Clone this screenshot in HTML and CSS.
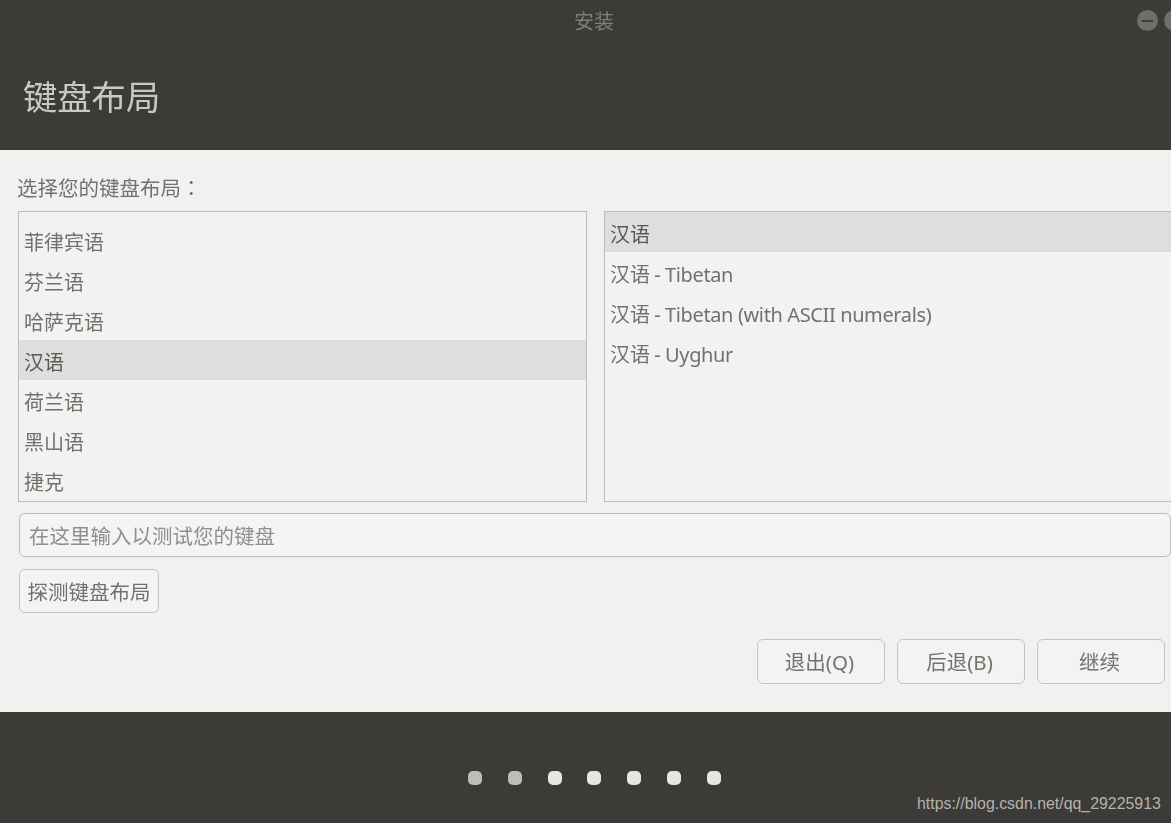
FILE: index.html
```html
<!DOCTYPE html>
<html lang="zh-CN">
<head>
<meta charset="utf-8">
<title>安装</title>
<link rel="stylesheet" href="styles.css">
</head>
<body>
<div class="window">
  <header class="header">
    <div class="titlebar">
      <span class="window-title">安装</span>
      <div class="window-controls">
        <span class="control"><span class="minus"></span></span>
        <span class="control"></span>
      </div>
    </div>
    <h1 class="page-title">键盘布局</h1>
  </header>
  <main class="main">
    <div class="prompt">选择您的键盘布局<span class="colon" lang="zh-TW">：</span></div>
    <div class="lists">
      <div class="list list-left">
        <ul class="rows rows-scrolled">
          <li class="row">法罗语</li>
          <li class="row">菲律宾语</li>
          <li class="row">芬兰语</li>
          <li class="row">哈萨克语</li>
          <li class="row selected">汉语</li>
          <li class="row">荷兰语</li>
          <li class="row">黑山语</li>
          <li class="row">捷克</li>
        </ul>
      </div>
      <div class="list list-right">
        <ul class="rows">
          <li class="row selected">汉语</li>
          <li class="row">汉语 <span class="latin">- Tibetan</span></li>
          <li class="row">汉语 <span class="latin">- Tibetan (with ASCII numerals)</span></li>
          <li class="row">汉语 <span class="latin">- Uyghur</span></li>
        </ul>
      </div>
    </div>
    <input class="test-input" type="text" placeholder="在这里输入以测试您的键盘">
    <div class="detect-row"><button class="btn btn-detect">探测键盘布局</button></div>
    <div class="actions">
      <button class="btn btn-action">退出(Q)</button>
      <button class="btn btn-action">后退(B)</button>
      <button class="btn btn-action">继续</button>
    </div>
  </main>
  <footer class="footer">
    <div class="dots">
      <span class="dot done"></span>
      <span class="dot done"></span>
      <span class="dot"></span>
      <span class="dot"></span>
      <span class="dot"></span>
      <span class="dot"></span>
      <span class="dot"></span>
    </div>
    <span class="watermark">https://blog.csdn.net/qq_29225913</span>
  </footer>
</div>
</body>
</html>
```
FILE: styles.css
```css
* { box-sizing: border-box; }
html, body { margin: 0; height: 100%; overflow: hidden; }
body {
  font-family: "Noto Sans", "Noto Sans CJK SC", sans-serif;
  font-size: 20px;
  color: #62605c;
  background: #3c3b37;
}
.window { width: 1171px; height: 823px; display: flex; flex-direction: column; overflow: hidden; }

.header { height: 150px; background: #3c3b37; flex: none; }
.titlebar {
  height: 42px;
  display: flex;
  align-items: center;
  position: relative;
  padding: 2px 0 0 574px;
}
.window-title { color: #7f7e7a; font-size: 20px; line-height: 40px; filter: blur(0.4px); }
.window-controls {
  position: absolute;
  left: 1137px;
  top: 10px;
  display: flex;
  gap: 6px;
  filter: blur(0.5px);
}
.control {
  width: 21px;
  height: 21px;
  border-radius: 50%;
  background: #6f6e6a;
  display: flex;
  align-items: center;
  justify-content: center;
  flex: none;
}
.minus { width: 11px; height: 2px; background: #3f3e3a; }
.page-title {
  margin: 0;
  padding: 31px 0 0 23px;
  font-size: 34.3px;
  line-height: 48px;
  font-weight: 400;
  color: #c9c8c4;
  filter: blur(0.4px);
}

.main {
  height: 562px;
  flex: none;
  background: #f2f1f0;
  padding: 25px 0 0 18px;
  display: flex;
  flex-direction: column;
  width: 1171px;
}
.prompt {
  height: 36px;
  line-height: 25px;
  margin-left: -1px;
  font-size: 20.5px;
  color: #73716e;
  filter: blur(0.4px);
}
.colon { font-family: "Noto Sans CJK TC", sans-serif; }
.lists { display: flex; gap: 17px; height: 291px; flex: none; }
.list {
  border: 1px solid #bdbcb9;
  background: #f3f2f1;
  overflow: hidden;
  height: 291px;
  flex: none;
  filter: blur(0.35px);
}
.list-left { width: 569px; }
.list-right { width: 580px; }
.rows { list-style: none; margin: 0; padding: 0; }
.rows-scrolled { margin-top: -32px; }
.row {
  height: 40px;
  line-height: 45px;
  padding-left: 5px;
  white-space: nowrap;
  color: #72716e;
}
.row.selected { background: #dfdedc; color: #5a5855; }
.latin { letter-spacing: -0.38px; margin-left: -1px; }

.test-input {
  display: block;
  width: 1152px;
  height: 44px;
  margin: 11px 0 0 1px;
  padding: 1px 9px 0;
  border: 1.5px solid #bcbbb8;
  border-radius: 6px;
  background: #f5f4f3;
  font: inherit;
  font-size: 20.5px;
  flex: none;
  filter: blur(0.35px);
}
.test-input::placeholder { color: #8f8e8c; opacity: 1; }

.btn {
  height: 44px;
  padding: 0;
  border: 1.5px solid #c4c3c0;
  border-radius: 6px;
  background: #f4f3f2;
  color: #73716e;
  font: inherit;
  font-size: 20.5px;
  filter: blur(0.35px);
}
.detect-row { margin: 12px 0 0 1px; display: flex; }
.btn-detect { width: 140px; }
.actions {
  margin-top: 26px;
  padding-right: 6px;
  display: flex;
  justify-content: flex-end;
  gap: 12px;
}
.btn-action { width: 128px; height: 45px; padding: 0 3px 2px 0; }

.footer {
  flex: 1;
  background: #3c3b37;
  position: relative;
  padding-top: 59px;
}
.dots { display: flex; justify-content: flex-start; gap: 25.75px; padding-left: 468px; filter: blur(0.5px); }
.dot { width: 14px; height: 14px; border-radius: 5px; background: #e6e6e3; flex: none; }
.dot.done { background: #bdbdb9; }
.watermark {
  position: absolute;
  left: 917px;
  top: 83px;
  font-family: "Liberation Sans", Arial, sans-serif;
  font-size: 15.9px;
  line-height: 18px;
  color: #b3b3b0;
}
```
